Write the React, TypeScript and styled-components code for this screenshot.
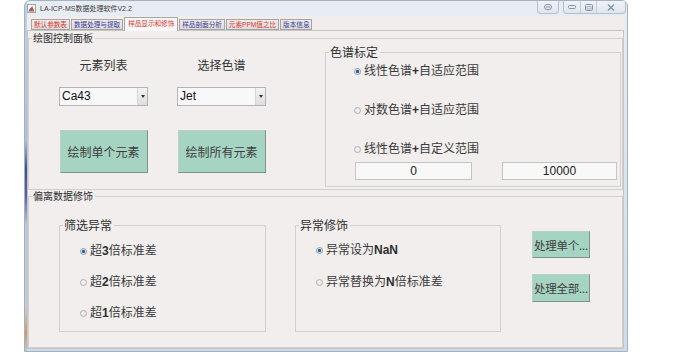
import React from 'react';
import styled, { createGlobalStyle } from 'styled-components';

const CJK = `"Noto Sans CJK SC", "Liberation Sans", sans-serif`;
const MIXED = `"Liberation Sans", "Noto Sans CJK SC", sans-serif`;

const GlobalStyle = createGlobalStyle`
    html, body {
        margin: 0;
        padding: 0;
        background: #ffffff;
    }
    body {
        font-family: ${MIXED};
        overflow: hidden;
    }
`;

const Window = styled.div`
    margin-left: 24px;
    width: 604px;
    height: 352px;
    box-sizing: border-box;
    border: 1px solid #a3b1c1;
    border-radius: 6px 6px 0 0;
    background:
        linear-gradient(180deg, #c3d3e6 0%, #a9bedc 40%, #3e4c9e 48%, #5864b2 56%, #b8c9df 64%, #c4cbd2 88%, #d69a5c 95%, #b9c7d6 100%) left top / 2px 100% no-repeat,
        linear-gradient(180deg, #e8edf3 0%, #dfe7f0 30%, #cddcec 100%);
    display: flex;
    flex-direction: column;
    overflow: hidden;
`;

const TitleBar = styled.div`
    height: 15px;
    display: flex;
    align-items: flex-start;
    padding-left: 2px;
`;

const AppIcon = styled.svg`
    margin-top: 3px;
    flex: none;
`;

const TitleText = styled.span`
    margin-left: 4px;
    margin-top: 3px;
    font-family: ${MIXED};
    font-size: 7px;
    line-height: 10px;
    color: #3c3c3c;
    flex: 1;
`;

const CaptionButtons = styled.div`
    display: flex;
    align-items: flex-start;
    gap: 4px;
    margin-right: 1px;
`;

const CaptionGroup = styled.div`
    display: flex;
    border: 1px solid #b4c0cd;
    border-top: none;
    border-radius: 0 0 4px 4px;
    overflow: hidden;
    background: linear-gradient(180deg, #f0f3f7 0%, #dfe6ee 100%);
`;

const CaptionButton = styled.div<{ $w: number }>`
    width: ${({ $w }) => $w}px;
    height: 12px;
    display: flex;
    align-items: center;
    justify-content: center;
    & + & {
        border-left: 1px solid #c3ccd6;
    }
`;

const Client = styled.div`
    flex: 1;
    margin: 0 3px 2px 2px;
    display: flex;
    flex-direction: column;
    background: #f0edec;
`;

const TabStrip = styled.div`
    height: 14px;
    display: flex;
    align-items: flex-end;
    padding-left: 4px;
    gap: 1px;
    position: relative;
    z-index: 1;
`;

const Tab = styled.div<{ $active?: boolean; $tone: 'red' | 'blue' }>`
    height: ${({ $active }) => ($active ? 14 : 11)}px;
    margin-bottom: ${({ $active }) => ($active ? -1 : 0)}px;
    padding: 0 ${({ $active }) => ($active ? 3 : 2)}px;
    box-sizing: border-box;
    border: 1px solid #a5a5a5;
    border-bottom: ${({ $active }) => ($active ? 'none' : '1px solid #a5a5a5')};
    background: ${({ $active }) =>
        $active ? '#faf9f9' : 'linear-gradient(180deg, #ececec 0%, #dcdcdc 100%)'};
    color: ${({ $tone }) => ($tone === 'red' ? '#e2352b' : '#3b3c96')};
    font-family: ${MIXED};
    font-size: 6.6px;
    line-height: ${({ $active }) => ($active ? 11 : 9)}px;
    white-space: nowrap;
`;

const TabPage = styled.div`
    flex: 1;
    border: 1px solid #c7c4c2;
    background: #f1eeed;
    display: flex;
    flex-direction: column;
`;

const Group = styled.fieldset<{ $h: number; $mt?: number }>`
    box-sizing: border-box;
    height: ${({ $h }) => $h}px;
    margin: ${({ $mt }) => $mt ?? 0}px 0 0 0;
    padding: 0;
    min-width: 0;
    border: 1px solid #d2cfcd;
`;

const Legend = styled.legend<{ $size: number }>`
    margin-left: 3px;
    padding: 0 2px 0 1px;
    font-family: ${CJK};
    font-size: ${({ $size }) => $size}px;
    line-height: ${({ $size }) => $size + 2}px;
    color: #2f2f2f;
`;

const GroupRow = styled.div<{ $h: number }>`
    height: ${({ $h }) => $h}px;
    display: flex;
`;

const PlotArea = styled.div`
    width: 296px;
    flex: none;
    box-sizing: border-box;
    padding: 13px 0 0 30px;
    display: flex;
    gap: 29px;
`;

const PlotColumn = styled.div`
    width: 89px;
    display: flex;
    flex-direction: column;
    align-items: center;
`;

const ColumnLabel = styled.div`
    height: 16px;
    font-family: ${CJK};
    font-size: 12px;
    line-height: 16px;
    color: #333;
    margin-bottom: 14px;
`;

const Combo = styled.div`
    width: 89px;
    height: 19px;
    box-sizing: border-box;
    border: 1px solid #b1b4b8;
    background: #f8f8f8;
    display: flex;
    align-items: stretch;
    margin-bottom: 24px;
`;

const ComboText = styled.span`
    flex: 1;
    padding-left: 2px;
    font-family: "Liberation Sans", sans-serif;
    font-size: 12px;
    line-height: 17px;
    color: #111;
`;

const ComboArrow = styled.span`
    width: 9px;
    border-left: 1px solid #d6d6d6;
    background: linear-gradient(180deg, #f4f4f4 0%, #dedede 100%);
    display: flex;
    align-items: center;
    justify-content: center;
    &::after {
        content: '';
        border-top: 3px solid #333;
        border-left: 2px solid transparent;
        border-right: 2px solid transparent;
    }
`;

const TealButton = styled.button<{ $w: number; $h: number; $fs: number }>`
    width: ${({ $w }) => $w}px;
    height: ${({ $h }) => $h}px;
    padding: 0;
    box-sizing: border-box;
    border: 1px solid #b9cfc7;
    border-right-color: #7f918a;
    border-bottom-color: #7f918a;
    background: #a6d4c3;
    font-family: ${CJK};
    font-size: ${({ $fs }) => $fs}px;
    color: #3d3d3d;
    white-space: nowrap;
    letter-spacing: ${({ $fs }) => ($fs < 12 ? -0.2 : 0)}px;
`;

const ScaleBox = styled.fieldset`
    flex: 1;
    box-sizing: border-box;
    margin: 1px 1px 2px 0;
    padding: 0;
    min-width: 0;
    border: 1px solid #d2cfcd;
`;

const RadioList = styled.div<{ $pt: number; $pl: number; $gap: number }>`
    padding: ${({ $pt }) => $pt}px 0 0 ${({ $pl }) => $pl}px;
    display: flex;
    flex-direction: column;
    gap: ${({ $gap }) => $gap}px;
`;

const RadioRow = styled.label`
    height: 16px;
    display: flex;
    align-items: center;
    gap: 3px;
    font-family: ${MIXED};
    font-size: 12px;
    line-height: 16px;
    color: #3a3a3a;
    white-space: nowrap;
`;

const RadioDot = styled.span<{ $on?: boolean }>`
    width: 7px;
    height: 7px;
    box-sizing: border-box;
    border-radius: 50%;
    border: 1px solid ${({ $on }) => ($on ? '#8e98a4' : '#b3b3b3')};
    background: ${({ $on }) =>
        $on
            ? 'radial-gradient(circle, #1f5f9e 0 1.3px, #d7e2ec 1.8px, #f4f6f8 100%)'
            : 'radial-gradient(circle, #f6f6f6 0, #e2e2e2 100%)'};
    flex: none;
`;

const Latin = styled.b`
    font-family: "Liberation Sans", sans-serif;
    font-weight: 700;
    color: #2e2e2e;
`;

const RangeRow = styled.div`
    display: flex;
    gap: 30px;
    padding-left: 29px;
    margin-top: 5px;
`;

const RangeInput = styled.input<{ $w: number }>`
    width: ${({ $w }) => $w}px;
    height: 18px;
    box-sizing: border-box;
    padding: 0;
    border: 1px solid #c4c4c4;
    background: #f8f8f8;
    text-align: center;
    font-family: "Liberation Sans", sans-serif;
    font-size: 12px;
    color: #222;
    outline: none;
`;

const FixArea = styled.div`
    display: flex;
    gap: 29px;
    padding: 16px 0 0 30px;
`;

const SubBox = styled.fieldset<{ $w: number }>`
    box-sizing: border-box;
    width: ${({ $w }) => $w}px;
    height: 114px;
    margin: 0;
    padding: 0;
    min-width: 0;
    border: 1px solid #d2cfcd;
`;

const ActionColumn = styled.div`
    display: flex;
    flex-direction: column;
    gap: 16px;
    margin: 13px 0 0 2px;
`;

type RadioProps = { on?: boolean; children: React.ReactNode };
const Radio = ({ on, children }: RadioProps) => (
    <RadioRow>
        <RadioDot $on={on} />
        <span>{children}</span>
    </RadioRow>
);

const tabs: { label: string; tone: 'red' | 'blue'; active?: boolean }[] = [
    { label: '默认参数表', tone: 'red' },
    { label: '数据处理与提取', tone: 'blue' },
    { label: '样品显示和修饰', tone: 'red', active: true },
    { label: '样品剖面分析', tone: 'blue' },
    { label: '元素PPM值之比', tone: 'red' },
    { label: '版本信息', tone: 'blue' },
];

export default function App() {
    return (
        <>
            <GlobalStyle />
            <Window>
                <TitleBar>
                    <AppIcon width="9" height="9" viewBox="0 0 9 9">
                        <rect x="0.5" y="0.5" width="8" height="8" fill="#ffffff" stroke="#9aa3ad" />
                        <path d="M1.5 7.5 L4 3.5 L5.2 2 L6 4 L7.5 7.5 Z" fill="#e0531f" />
                        <path d="M1.5 7.5 L4 3.5 L4.6 6 Z" fill="#2f66b8" />
                    </AppIcon>
                    <TitleText>LA-ICP-MS数据处理软件V2.2</TitleText>
                    <CaptionButtons>
                        <CaptionGroup>
                            <CaptionButton $w={20}>
                                <svg width="10" height="6" viewBox="0 0 10 6">
                                    <rect x="1.5" y="0.5" width="7" height="5" rx="2.5" fill="none" stroke="#8592a2" />
                                    <path d="M3 3 H7" stroke="#8592a2" />
                                </svg>
                            </CaptionButton>
                        </CaptionGroup>
                        <CaptionGroup>
                            <CaptionButton $w={16}>
                                <svg width="8" height="4" viewBox="0 0 8 4">
                                    <rect x="0.5" y="0.5" width="7" height="3" rx="1" fill="none" stroke="#8592a2" />
                                </svg>
                            </CaptionButton>
                            <CaptionButton $w={15}>
                                <svg width="8" height="7" viewBox="0 0 8 7">
                                    <rect x="0.5" y="0.5" width="7" height="6" rx="1" fill="none" stroke="#8592a2" />
                                    <rect x="2" y="2.5" width="4" height="2.5" fill="none" stroke="#a9b3bf" />
                                </svg>
                            </CaptionButton>
                            <CaptionButton $w={28}>
                                <svg width="8" height="7" viewBox="0 0 8 7">
                                    <path d="M1 0.5 L7 6.5 M7 0.5 L1 6.5" stroke="#8592a2" strokeWidth="1.4" />
                                </svg>
                            </CaptionButton>
                        </CaptionGroup>
                    </CaptionButtons>
                </TitleBar>

                <Client>
                    <TabStrip>
                        {tabs.map((t) => (
                            <Tab key={t.label} $tone={t.tone} $active={t.active}>
                                {t.label}
                            </Tab>
                        ))}
                    </TabStrip>

                    <TabPage>
                        <Group $h={158} $mt={1}>
                            <Legend $size={10}>绘图控制面板</Legend>
                            <GroupRow $h={145}>
                                <PlotArea>
                                    <PlotColumn>
                                        <ColumnLabel>元素列表</ColumnLabel>
                                        <Combo>
                                            <ComboText>Ca43</ComboText>
                                            <ComboArrow />
                                        </Combo>
                                        <TealButton $w={88} $h={43} $fs={12}>绘制单个元素</TealButton>
                                    </PlotColumn>
                                    <PlotColumn>
                                        <ColumnLabel>选择色谱</ColumnLabel>
                                        <Combo>
                                            <ComboText>Jet</ComboText>
                                            <ComboArrow />
                                        </Combo>
                                        <TealButton $w={88} $h={43} $fs={12}>绘制所有元素</TealButton>
                                    </PlotColumn>
                                </PlotArea>

                                <ScaleBox>
                                    <Legend $size={12}>色谱标定</Legend>
                                    <RadioList $pt={4} $pl={28} $gap={23}>
                                        <Radio on>线性色谱<Latin>+</Latin>自适应范围</Radio>
                                        <Radio>对数色谱<Latin>+</Latin>自适应范围</Radio>
                                        <Radio>线性色谱<Latin>+</Latin>自定义范围</Radio>
                                    </RadioList>
                                    <RangeRow>
                                        <RangeInput $w={117} value="0" readOnly />
                                        <RangeInput $w={115} value="10000" readOnly />
                                    </RangeRow>
                                </ScaleBox>
                            </GroupRow>
                        </Group>

                        <Group $h={158}>
                            <Legend $size={10}>偏离数据修饰</Legend>
                            <FixArea>
                                <SubBox $w={207}>
                                    <Legend $size={12}>筛选异常</Legend>
                                    <RadioList $pt={11} $pl={20} $gap={15}>
                                        <Radio on>超<Latin>3</Latin>倍标准差</Radio>
                                        <Radio>超<Latin>2</Latin>倍标准差</Radio>
                                        <Radio>超<Latin>1</Latin>倍标准差</Radio>
                                    </RadioList>
                                </SubBox>
                                <SubBox $w={206}>
                                    <Legend $size={12}>异常修饰</Legend>
                                    <RadioList $pt={10} $pl={20} $gap={16}>
                                        <Radio on>异常设为<Latin>NaN</Latin></Radio>
                                        <Radio>异常替换为<Latin>N</Latin>倍标准差</Radio>
                                    </RadioList>
                                </SubBox>
                                <ActionColumn>
                                    <TealButton $w={58} $h={27} $fs={11.5}>处理单个...</TealButton>
                                    <TealButton $w={58} $h={28} $fs={11.5}>处理全部...</TealButton>
                                </ActionColumn>
                            </FixArea>
                        </Group>
                    </TabPage>
                </Client>
            </Window>
        </>
    );
}
